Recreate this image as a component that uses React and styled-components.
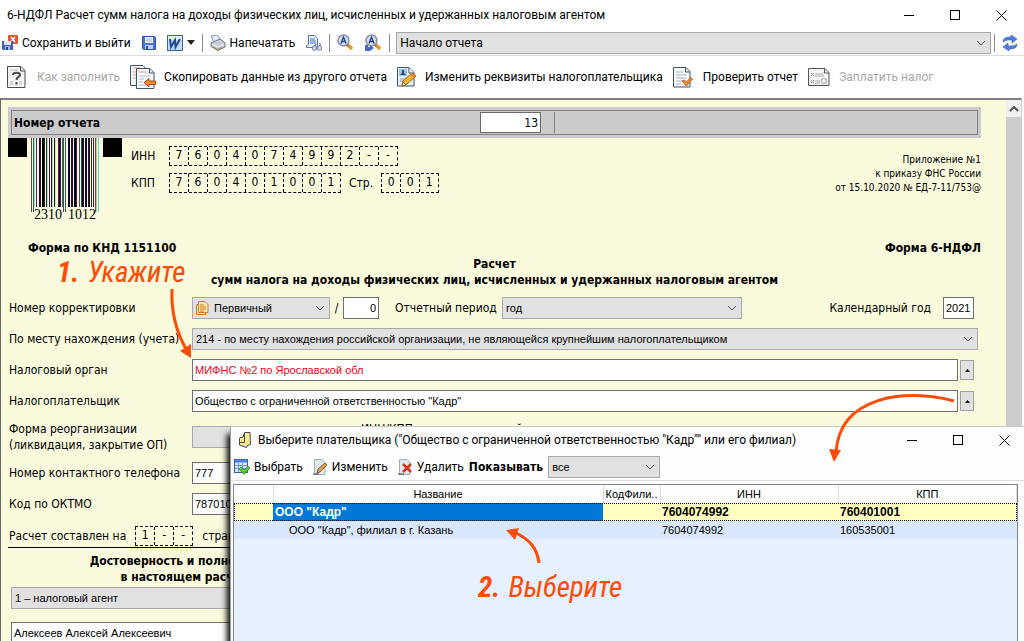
import React from "react";
import styled, { createGlobalStyle } from "styled-components";

const ui = `Roboto, "Noto Sans", sans-serif`;
const form = `"DejaVu Sans Condensed", "DejaVu Sans", sans-serif`;
const field = `"Liberation Sans", Arial, sans-serif`;

// x, width, colour, reaches down between the digits
const bars = [
  [0, 1, "#604040", true],
  [2, 1, "#306060", true],
  [3, 1, "#90e0d8", false],
  [5, 1, "#602050", false],
  [8, 1, "#101050", false],
  [9, 1, "#301010", false],
  [11, 2, "#000000", false],
  [13, 1, "#302010", false],
  [15, 1, "#103838", false],
  [16, 1, "#a0e8c0", false],
  [18, 1, "#501030", false],
  [20, 1, "#101040", false],
  [21, 1, "#b0d8d0", false],
  [23, 1, "#400818", false],
  [24, 1, "#c0f0c0", false],
  [27, 1, "#601040", false],
  [28, 1, "#201028", false],
  [29, 1, "#102050", false],
  [31, 1, "#387848", false],
  [32, 1, "#604050", true],
  [34, 1, "#286060", true],
  [37, 2, "#080830", false],
  [40, 1, "#401010", false],
  [41, 1, "#101048", false],
  [43, 2, "#000018", false],
  [45, 1, "#601030", false],
  [48, 1, "#704050", false],
  [50, 1, "#106058", false],
  [51, 1, "#100820", false],
  [52, 1, "#300820", false],
  [54, 2, "#080840", false],
  [57, 1, "#401018", false],
  [58, 1, "#100830", false],
  [60, 1, "#083820", false],
  [62, 1, "#601040", false],
  [64, 1, "#804050", true],
  [65, 1, "#a0d898", true],
  [67, 1, "#70d0d8", true],
];

const SaveExitIcon = () => (
  <svg width="16" height="16" viewBox="0 0 16 16" aria-hidden="true">
    <rect x="6" y="0" width="10" height="9" rx="1" fill="#e2552f" />
    <path d="M9 2l4 5M13 2l-4 5" stroke="#fff" strokeWidth="1.5" />
    <path d="M0 6h11v9H1l-1-1z" fill="#3f62c0" />
    <rect x="2" y="6" width="7" height="4" fill="#dfe6f8" />
    <rect x="3" y="11" width="5" height="4" fill="#a9b9e2" />
    <rect x="4" y="12" width="2" height="3" fill="#27428f" />
  </svg>
);

const SaveIcon = () => (
  <svg width="14" height="14" viewBox="0 0 14 14" aria-hidden="true">
    <path d="M.5.5h12l1 1v12h-12l-1-1z" fill="#4a74d4" stroke="#2c51ac" />
    <rect x="3" y="1" width="8" height="6" fill="#f3f6fd" />
    <path d="M4 3h6M4 5h6" stroke="#9db0dd" />
    <rect x="3" y="9" width="8" height="4" fill="#c3cfee" />
    <rect x="4" y="10" width="2" height="3" fill="#2c51ac" />
  </svg>
);

const WordIcon = () => (
  <svg width="16" height="16" viewBox="0 0 16 16" aria-hidden="true">
    <rect x=".5" y=".5" width="15" height="15" fill="#c6daf5" stroke="#3563b0" />
    <path d="M1 1h14v4H1z" fill="#e8f0fb" />
    <path
      d="M3 4l1 8L8 5l.5 7L13 4"
      fill="none"
      stroke="#1f4a9c"
      strokeWidth="2"
    />
  </svg>
);

const PrintIcon = () => (
  <svg width="16" height="16" viewBox="0 0 16 16" aria-hidden="true">
    <path d="M1 1l6-1 4 5-7 3z" fill="#e6eefc" stroke="#7f95c4" />
    <path d="M1 8l9-4 5 4v4l-7 3.500-7-4z" fill="#c9ccd2" stroke="#71757d" />
    <path d="M2 9l6 3 6-3" fill="none" stroke="#fff" />
    <path d="M3 12l5 2.500 4-2" fill="none" stroke="#9b8a3c" />
  </svg>
);

const PreviewIcon = () => (
  <svg width="16" height="16" viewBox="0 0 16 16" aria-hidden="true">
    <path d="M2.500.5h6l3 3v9h-11v-2l2-1z" fill="#eaf0fd" stroke="#4b72cf" />
    <path d="M4 4h5M4 6h6M4 8h6" stroke="#4b72cf" />
    <circle cx="8.500" cy="13" r="2.300" fill="#d5dbe8" stroke="#6f7f9f" />
    <circle cx="13.500" cy="13" r="2.300" fill="#d5dbe8" stroke="#6f7f9f" />
    <path d="M10 9l-1 2M14 8v3" stroke="#55617c" />
  </svg>
);

const FindIcon = ({ next }) => (
  <svg width="17" height="17" viewBox="0 0 17 17" aria-hidden="true">
    <path d="M10 10l5 5" stroke="#e9962b" strokeWidth="3.500" />
    <path d="M9 10l2 2" stroke="#8a5520" strokeWidth="2" />
    <circle cx="6.500" cy="6.500" r="5.500" fill="#d3def4" stroke="#8992a8" strokeWidth="1.500" />
    <path d="M4 9.500L6.500 3 9 9.500M5 7.500h3" fill="none" stroke="#1f3f8c" strokeWidth="1.300" />
    {next && <path d="M0 11h3v2h2v-2l4 3-4 3H0z" fill="#4569c6" />}
  </svg>
);

const RefreshIcon = () => (
  <svg width="16" height="16" viewBox="0 0 16 16" aria-hidden="true">
    <path d="M1 7c0-4 3-5 8-5V0l6 4-5 4V5C5 5 4 5 1 7z" fill="#4f7fe0" stroke="#2f57b4" strokeWidth=".6" />
    <path d="M15 9c0 4-3 5-8 5v2l-6-4 5-4v3c5 0 6 0 9-2z" fill="#4f7fe0" stroke="#2f57b4" strokeWidth=".6" />
  </svg>
);

const HelpIcon = () => (
  <svg width="22" height="22" viewBox="0 0 22 22" aria-hidden="true">
    <path d="M.5.5H14l4 4v17H.5z" fill="#f4f4f4" stroke="#4d4d4d" />
    <path d="M13.500 1v4H18" fill="none" stroke="#4d4d4d" />
    <path d="M3 4h8M3 16h3M12 16h3M3 18h3M12 18h3" stroke="#b8b8b8" />
    <path
      d="M6 9c0-3 7-3 7 0 0 2-3.500 2-3.500 5M9.500 16v2.500"
      fill="none"
      stroke="#4a4a4a"
      strokeWidth="2"
    />
  </svg>
);

const CopyIcon = () => (
  <svg width="26" height="24" viewBox="0 0 26 24" aria-hidden="true">
    <path d="M.5.5H13l3 3v17H.5z" fill="#f6f8f9" stroke="#3f5566" />
    <path d="M3 3h7M3 7h3M3 10h3M3 13h3" stroke="#e39c8a" />
    <path d="M6.500 3.500H20l4 4v16H6.500z" fill="#f6f8f9" stroke="#3f5566" />
    <path d="M19.500 4v4H24" fill="none" stroke="#3f5566" />
    <path d="M9 7h8" stroke="#e39c8a" />
    <path d="M9 11h12M9 14h5M9 17h4M9 20h8" stroke="#b3bfc8" />
    <path d="M14 17.500l5-4v2.500h6.500v3.500H19V22z" fill="#f08c32" stroke="#a8491b" />
  </svg>
);

const EditCardIcon = () => (
  <svg width="20" height="20" viewBox="0 0 20 20" aria-hidden="true">
    <path d="M.5.5H12l5 5v13.500H.5z" fill="#e8eff4" stroke="#3c5568" />
    <path d="M12 1v5h5" fill="#fff" stroke="#3c5568" />
    <rect x="2" y="2" width="8" height="7" fill="#9cc4e4" />
    <path d="M5 3h2v3l2 2H3l2-2z" fill="#234f7a" />
    <path d="M3 12h6M3 14h4" stroke="#8ca0ae" />
    <path d="M5 19l1-5 9-8 4 3-9 8z" fill="#f3b63c" stroke="#9b6013" />
    <path d="M15 6l4 3-2 2-4-3z" fill="#ea7d35" />
    <path d="M5 19l1-4 3 3z" fill="#f4e2bd" stroke="#6a5030" strokeWidth=".6" />
  </svg>
);

const CheckDocIcon = () => (
  <svg width="22" height="21" viewBox="0 0 22 21" aria-hidden="true">
    <path d="M.5.5H13l4 4V20H.5z" fill="#f5f7f8" stroke="#3f5566" />
    <path d="M12.500 1v4H17" fill="none" stroke="#3f5566" />
    <path d="M3 5h7M3 8h11M3 11h11M3 14h6M3 17h5" stroke="#a9b8c4" />
    <path d="M9 14l2.500-1 2 2 4-4.500 2 1.500-6 7z" fill="#f08c32" stroke="#a8491b" strokeWidth=".8" />
  </svg>
);

const PayIcon = () => (
  <svg width="23" height="18" viewBox="0 0 23 18" aria-hidden="true">
    <path d="M.5.500H17l4 4V17.500H.5z" fill="#f4f4f4" stroke="#555" />
    <path d="M16.500 1v4H21" fill="none" stroke="#555" />
    <path d="M7 6h8M7 8h9M7 13h5M7 15h5" stroke="#aaa" />
    <path d="M3 5l3 3M6 5L3 8M3 12l3 3M6 12l-3 3" stroke="#8f8f8f" />
    <circle cx="16" cy="13" r="2.500" fill="#fff" stroke="#bbb" strokeWidth="1.500" />
  </svg>
);

const PageIcon = () => (
  <svg width="13" height="14" viewBox="0 0 13 14" aria-hidden="true">
    <path d="M2.500.5H9l3 3v8H2.500z" fill="#fbe6ac" stroke="#c98224" />
    <path d="M2.500 3.500h-2v10h9v-2" fill="none" stroke="#c98224" />
    <path d="M4 4h4M4 6h6M4 8h6M4 10h4" stroke="#c98224" />
  </svg>
);

const ScrollIcon = () => (
  <svg width="13" height="16" viewBox="0 0 13 16" aria-hidden="true">
    <path
      d="M5.500.5H11l.5 12-3 1-1 2L2 13.500.5 13V6L4 5z"
      fill="#ffe98c"
      stroke="#3c4a5c"
    />
    <path d="M5.500 1v9.500H1" fill="none" stroke="#3c4a5c" />
  </svg>
);

const PickIcon = () => (
  <svg width="16" height="16" viewBox="0 0 16 16" aria-hidden="true">
    <rect x=".5" y=".5" width="13" height="13" fill="#dbe7fb" stroke="#2f5fc0" />
    <path d="M1 2h12" stroke="#4a7fdd" strokeWidth="3" />
    <path d="M1 6.500h12M1 9.500h12M4.500 4v9M8.500 4v9" stroke="#6c95df" />
    <path d="M5 10l2-2 3 3 4-4 2 2-6 6.500z" fill="#5cc53e" stroke="#2b7d1c" strokeWidth=".7" />
  </svg>
);

const EditIcon = () => (
  <svg width="15" height="16" viewBox="0 0 15 16" aria-hidden="true">
    <path d="M1.500.5H9l3 3v12H1.500z" fill="#dfe8ea" stroke="#9fb0b6" />
    <path d="M4 14l1-4 7-6 2 2-7 7z" fill="#d9a24a" stroke="#5f4a2c" strokeWidth=".8" />
    <path d="M0 15h6" stroke="#3d4a50" />
  </svg>
);

const DeleteIcon = () => (
  <svg width="15" height="16" viewBox="0 0 15 16" aria-hidden="true">
    <path d="M1.500.5H9l3 3v12H1.500z" fill="#dfe8ea" stroke="#9fb0b6" />
    <path d="M5 5l8 8M13 5l-8 8" stroke="#d2361f" strokeWidth="2.500" />
    <path d="M0 15h6" stroke="#3d4a50" />
  </svg>
);

const Chevron = ({ up }) => (
  <svg width="10" height="6" viewBox="0 0 10 6" aria-hidden="true">
    <path
      d={up ? "M1 5l4-4 4 4" : "M1 1l4 4 4-4"}
      fill="none"
      stroke="#505050"
      strokeWidth={up ? 2 : 1}
    />
  </svg>
);

const WindowButtons = () => (
  <Controls>
    <ControlButton aria-label="Свернуть">
      <svg width="11" height="11" viewBox="0 0 11 11">
        <path d="M0 5.500h10" stroke="#000" />
      </svg>
    </ControlButton>
    <ControlButton aria-label="Развернуть">
      <svg width="11" height="11" viewBox="0 0 11 11">
        <rect x=".5" y=".5" width="9" height="9" fill="none" stroke="#000" />
      </svg>
    </ControlButton>
    <ControlButton aria-label="Закрыть">
      <svg width="11" height="11" viewBox="0 0 11 11">
        <path d="M.5.5l10 10M10.500.5l-10 10" stroke="#000" />
      </svg>
    </ControlButton>
  </Controls>
);

const Combo = ({ id, value, icon, label, ...rest }) => (
  <ComboBox {...rest}>
    {icon}
    <ComboSelect id={id} aria-label={label} defaultValue={value}>
      <option>{value}</option>
    </ComboSelect>
    <ComboArrow>
      <Chevron />
    </ComboArrow>
  </ComboBox>
);

const Code = ({ value }) => (
  <CodeCells>
    {value.split("").map((char, i) => (
      <CodeCell key={i}>{char}</CodeCell>
    ))}
  </CodeCells>
);

const MoreButton = ({ label }) => (
  <SmallButton aria-label={label}>
    <svg width="5" height="3" viewBox="0 0 5 3">
      <path d="M0 3L2.500 0 5 3z" fill="#000" />
    </svg>
  </SmallButton>
);

const PayerDialog = () => (
  <Dialog role="dialog" aria-labelledby="payer-title">
    <DialogTitleBar>
      <ScrollIcon />
      <DialogTitle id="payer-title">
        Выберите плательщика ("Общество с ограниченной ответственностью "Кадр""
        или его филиал)
      </DialogTitle>
      <WindowButtons />
    </DialogTitleBar>
    <DialogToolbar>
      <ToolButton>
        <PickIcon />
        Выбрать
      </ToolButton>
      <ToolButton>
        <EditIcon />
        Изменить
      </ToolButton>
      <ToolButton>
        <DeleteIcon />
        Удалить
      </ToolButton>
      <ShowLabel htmlFor="show">Показывать</ShowLabel>
      <Combo id="show" value="все" $width={112} />
    </DialogToolbar>
    <GridFrame>
      <Grid>
        <colgroup>
          <col width="39" />
          <col width="330" />
          <col width="57" />
          <col width="178" />
          <col />
        </colgroup>
        <thead>
          <tr>
            <HeadCell />
            <HeadCell>Название</HeadCell>
            <HeadCell>КодФили..</HeadCell>
            <HeadCell>ИНН</HeadCell>
            <HeadCell>КПП</HeadCell>
          </tr>
        </thead>
        <tbody>
          <ActiveRow>
            <Cell />
            <Cell $selected>ООО "Кадр"</Cell>
            <Cell />
            <Cell>7604074992</Cell>
            <Cell>760401001</Cell>
          </ActiveRow>
          <GridRow>
            <Cell />
            <Cell $nested>ООО "Кадр", филиал в г. Казань</Cell>
            <Cell />
            <Cell>7604074992</Cell>
            <Cell>160535001</Cell>
          </GridRow>
        </tbody>
      </Grid>
    </GridFrame>
  </Dialog>
);

const App = () => (
  <>
    <GlobalStyle />
    <Window>
      <TitleBar>
        <WindowTitle>
          6-НДФЛ Расчет сумм налога на доходы физических лиц, исчисленных и
          удержанных налоговым агентом
        </WindowTitle>
        <WindowButtons />
      </TitleBar>
      <Toolbar>
        <ToolButton>
          <SaveExitIcon />
          Сохранить и выйти
        </ToolButton>
        <ToolButton aria-label="Сохранить">
          <SaveIcon />
        </ToolButton>
        <ToolButton aria-label="Открыть в Word">
          <WordIcon />
          <svg width="8" height="5" viewBox="0 0 8 5">
            <path d="M0 0h8L4 5z" fill="#222" />
          </svg>
        </ToolButton>
        <Separator />
        <ToolButton>
          <PrintIcon />
          Напечатать
        </ToolButton>
        <ToolButton aria-label="Просмотр">
          <PreviewIcon />
        </ToolButton>
        <Separator />
        <ToolButton aria-label="Найти">
          <FindIcon />
        </ToolButton>
        <ToolButton aria-label="Найти далее">
          <FindIcon next />
        </ToolButton>
        <Separator />
        <SectionCombo label="Раздел" value="Начало отчета" />
        <Separator />
        <ToolButton aria-label="Обновить">
          <RefreshIcon />
        </ToolButton>
      </Toolbar>
      <ActionBar>
        <ActionButton disabled>
          <HelpIcon />
          Как заполнить
        </ActionButton>
        <ActionButton>
          <CopyIcon />
          Скопировать данные из другого отчета
        </ActionButton>
        <ActionButton>
          <EditCardIcon />
          Изменить реквизиты налогоплательщика
        </ActionButton>
        <ActionButton>
          <CheckDocIcon />
          Проверить отчет
        </ActionButton>
        <ActionButton disabled>
          <PayIcon />
          Заплатить налог
        </ActionButton>
      </ActionBar>
      <Body>
        <Report>
          <NumberBar>
            <NumberLabel htmlFor="number">Номер отчета</NumberLabel>
            <NumberInput id="number" defaultValue="13" />
            <NumberRest />
          </NumberBar>
          <Head>
            <Marks>
              <Mark />
              <Barcode width="68" height="84" viewBox="0 0 68 84">
                {bars.map(([x, width, fill, long]) => (
                  <rect
                    key={x}
                    x={x}
                    y="0"
                    width={width}
                    height={long ? 74 : 69}
                    fill={fill}
                  />
                ))}
                <text x="3" y="81">
                  2310
                </text>
                <text x="37" y="81">
                  1012
                </text>
              </Barcode>
              <Mark />
            </Marks>
            <Codes>
              <CodeLine>
                <CodeLabel>ИНН</CodeLabel>
                <Code value="7604074992--" />
              </CodeLine>
              <CodeLine>
                <CodeLabel>КПП</CodeLabel>
                <Code value="760401001" />
                <span>Стр.</span>
                <Code value="001" />
              </CodeLine>
            </Codes>
            <Appendix>
              Приложение №1
              <br />
              к приказу ФНС России
              <br />
              от 15.10.2020 № ЕД-7-11/753@
            </Appendix>
          </Head>
          <FormNames>
            <span>Форма по КНД 1151100</span>
            <span>Форма 6-НДФЛ</span>
          </FormNames>
          <Heading>
            Расчет
            <br />
            сумм налога на доходы физических лиц, исчисленных и удержанных
            налоговым агентом
          </Heading>
          <Fields>
            <Row $inset={7}>
              <Label htmlFor="correction">Номер корректировки</Label>
              <Combo
                id="correction"
                value="Первичный"
                icon={<PageIcon />}
                $width={138}
              />
              <Slash>/</Slash>
              <Input
                aria-label="Номер"
                defaultValue="0"
                $width={36}
                $align="right"
              />
              <PeriodLabel htmlFor="period">Отчетный период</PeriodLabel>
              <Combo id="period" value="год" $width={240} />
              <YearLabel htmlFor="year">Календарный год</YearLabel>
              <Input id="year" defaultValue="2021" $width={31} />
            </Row>
            <Row $inset={3}>
              <Label htmlFor="place">По месту нахождения (учета)</Label>
              <Combo
                id="place"
                value="214 - по месту нахождения российской организации, не являющейся крупнейшим налогоплательщиком"
              />
            </Row>
            <Row $inset={7}>
              <Label htmlFor="office">Налоговый орган</Label>
              <Input
                id="office"
                defaultValue="МИФНС №2 по Ярославской обл"
                $color="#f00018"
              />
              <MoreButton label="Выбрать налоговый орган" />
            </Row>
            <Row $inset={7}>
              <Label htmlFor="payer">Налогоплательщик</Label>
              <Input
                id="payer"
                defaultValue={'Общество с ограниченной ответственностью "Кадр"'}
              />
              <MoreButton label="Выбрать налогоплательщика" />
            </Row>
            <Row $inset={3}>
              <Label htmlFor="reorg">
                Форма реорганизации
                <br />
                (ликвидация, закрытие ОП)
              </Label>
              <Combo id="reorg" value="" $width={138} />
              <ReorgLabel>ИНН/КПП реорганизованной</ReorgLabel>
            </Row>
            <Row>
              <Label htmlFor="phone">Номер контактного телефона</Label>
              <Input id="phone" defaultValue="777" $width={240} />
            </Row>
            <Row>
              <Label htmlFor="oktmo">Код по ОКТМО</Label>
              <Input id="oktmo" defaultValue="78701000" $width={240} />
            </Row>
            <PagesRow>
              Расчет составлен на
              <Code value="1--" />
              страницах
            </PagesRow>
          </Fields>
          <Signer>
            <Heading>
              Достоверность и полноту сведений, указанных
              <br />в настоящем расчете, подтверждаю:
            </Heading>
            <Combo label="Подписант" value="1 – налоговый агент" />
            <SignerInput
              aria-label="ФИО"
              defaultValue="Алексеев Алексей Алексеевич"
            />
          </Signer>
        </Report>
        <ScrollTrack>
          <ScrollArrow>
            <Chevron up />
          </ScrollArrow>
          <ScrollThumb />
        </ScrollTrack>
      </Body>
      <PayerDialog />
      <Hint $left={57} $top={254}>
        <b>1.</b>
        Укажите
      </Hint>
      <Hint $left={478} $top={569}>
        <b>2.</b>
        Выберите
      </Hint>
      <Arrows width="1024" height="641" viewBox="0 0 1024 641">
        <g fill="none" stroke="#ff4b05" strokeWidth="3">
          <path d="M172 289C171 312 177 333 186 349" />
          <path d="M954 401C905 388 840 396 836 452" />
          <path d="M539 563C537 548 530 540 516 533" />
        </g>
        <g fill="#ff4b05">
          <path d="M180 351l11-7v14z" />
          <path d="M829 449l12 1-7 12z" />
          <path d="M506 530l13-2-4 12z" />
        </g>
      </Arrows>
    </Window>
  </>
);

export default App;

const GlobalStyle = createGlobalStyle`
  * {
    box-sizing: border-box;
  }
  body {
    margin: 0;
    background: #fff;
    color: #000;
    font: 12px/16px ${ui};
  }
  button, input, select {
    font: inherit;
    color: inherit;
    margin: 0;
  }
  svg {
    flex: none;
  }
`;

const Window = styled.div`
  position: relative;
  display: flex;
  flex-direction: column;
  height: 100vh;
  overflow: hidden;
`;

const TitleBar = styled.header`
  display: flex;
  align-items: center;
  height: 30px;
  padding: 0 17px 0 7px;
`;

const WindowTitle = styled.h1`
  flex: 1;
  margin: 0;
  font-size: 12px;
  font-weight: 400;
  white-space: nowrap;
`;

const Controls = styled.div`
  display: flex;
  gap: 35px;
`;

const ControlButton = styled.button`
  display: flex;
  padding: 0;
  border: none;
  background: none;
`;

const Toolbar = styled.div`
  display: flex;
  align-items: center;
  gap: 7px;
  height: 26px;
  padding: 0 6px 0 2px;
  border-bottom: 1px solid #dcdcdc;
`;

const ToolButton = styled.button`
  display: flex;
  align-items: center;
  gap: 4px;
  padding: 0;
  border: none;
  background: none;
  white-space: nowrap;
  & + & {
    margin-left: 4px;
  }
`;

const Separator = styled.div`
  width: 1px;
  height: 18px;
  background: #8c8c8c;
`;

const SectionCombo = styled(Combo)`
  && {
    margin: 0 -4px 0 -1px;
    font: 12px ${ui};
  }
`;

const ActionBar = styled.div`
  display: flex;
  align-items: center;
  gap: 10px;
  height: 42px;
  padding: 0 7px;
`;

const ActionButton = styled(ToolButton)`
  gap: 8px;
  && {
    margin: 0;
  }
  &:disabled {
    color: #a8a8a8;
  }
`;

const Body = styled.div`
  display: flex;
  flex: 1;
  min-height: 0;
  margin-right: 2px;
  border-top: 2px solid #808080;
  border-right: 1px solid #d0d0d0;
  border-left: 1px solid #696969;
`;

const Report = styled.main`
  flex: 1;
  min-width: 0;
  padding: 7px 25px 0 7px;
  overflow: hidden;
  background: #fafadc;
  font: 12px/16px ${form};
`;

const NumberBar = styled.div`
  display: flex;
  align-items: center;
  height: 31px;
  padding: 2px 2px 2px 3px;
  border: 3px solid #cbcbcb;
  background: #cbcbcb;
  outline: 1px solid #808080;
  outline-offset: -4px;
  font-weight: 700;
`;

const NumberLabel = styled.label`
  flex: 0 0 466px;
`;

const NumberInput = styled.input`
  width: 61px;
  height: 21px;
  padding: 0 2px;
  border: 1px solid #696969;
  background: #fff;
  font-weight: 400;
  text-align: right;
`;

const NumberRest = styled.div`
  flex: 1;
  align-self: stretch;
  margin-left: 13px;
  border-left: 1px solid #808080;
`;

const Head = styled.div`
  display: flex;
  height: 102px;
`;

const Marks = styled.div`
  display: flex;
  align-items: flex-start;
  justify-content: space-between;
  width: 114px;
`;

const Mark = styled.div`
  width: 19px;
  height: 19px;
  background: #000;
`;

const Barcode = styled.svg`
  font: 14px "Liberation Serif", "Times New Roman", serif;
`;

const Codes = styled.div`
  display: flex;
  flex-direction: column;
  gap: 7px;
  flex: 1;
  padding: 8px 0 0 9px;
`;

const CodeLine = styled.div`
  display: flex;
  align-items: center;
  gap: 8px;
`;

const CodeLabel = styled.span`
  width: 30px;
`;

const CodeCells = styled.span`
  display: flex;
  border: 1px dashed #000;
  border-left: none;
`;

const CodeCell = styled.span`
  width: 19px;
  height: 18px;
  border-left: 1px dashed #000;
  line-height: 16px;
  text-align: center;
`;

const Appendix = styled.div`
  padding-top: 15px;
  font-size: 10px;
  line-height: 14px;
  text-align: right;
`;

const FormNames = styled.div`
  display: flex;
  justify-content: space-between;
  padding-left: 20px;
  font-weight: 700;
`;

const Heading = styled.h2`
  margin: 0;
  font-size: 12px;
  line-height: 16px;
  text-align: center;
`;

const Fields = styled.div`
  display: flex;
  flex-direction: column;
  gap: 9px;
  padding-top: 9px;
`;

const Row = styled.div`
  display: flex;
  align-items: center;
  min-height: 22px;
  padding: 0 ${({ $inset }) => $inset || 0}px 0 1px;
`;

const Label = styled.label`
  flex: 0 0 183px;
  white-space: nowrap;
`;

const ComboBox = styled.div`
  position: relative;
  display: flex;
  align-items: center;
  flex: ${({ $width }) => ($width ? `0 0 ${$width}px` : 1)};
  min-width: 0;
  height: 22px;
  padding-left: 3px;
  border: 1px solid #a9a9a9;
  background: #e1e1e1;
  font: 11px ${field};
`;

const ComboSelect = styled.select`
  flex: 1;
  min-width: 0;
  height: 20px;
  padding: 0;
  border: none;
  outline: none;
  appearance: none;
  background: none;
  svg + & {
    padding-left: 5px;
  }
`;

const ComboArrow = styled.span`
  position: absolute;
  top: 0;
  right: 4px;
  bottom: 0;
  display: flex;
  align-items: center;
  pointer-events: none;
`;

const Input = styled.input`
  flex: ${({ $width }) => ($width ? `0 0 ${$width}px` : 1)};
  min-width: 0;
  height: 22px;
  padding: 0 2px;
  border: 1px solid #707070;
  background: #fff;
  color: ${({ $color }) => $color || "#000"};
  font: 11px ${field};
  text-align: ${({ $align }) => $align || "left"};
`;

const Slash = styled.span`
  width: 13px;
  text-align: center;
`;

const PeriodLabel = styled.label`
  width: 123px;
  padding-left: 16px;
  white-space: nowrap;
`;

const YearLabel = styled.label`
  margin: 0 12px 0 auto;
`;

const SmallButton = styled.button`
  display: flex;
  align-items: center;
  justify-content: center;
  width: 14px;
  height: 20px;
  margin-left: 2px;
  padding: 0;
  border: 1px solid #a0a0a0;
  background: #e1e1e1;
`;

const ReorgLabel = styled.span`
  align-self: flex-start;
  padding-left: 31px;
`;

const PagesRow = styled.div`
  display: flex;
  align-items: center;
  gap: 9px;
  height: 24px;
  padding-left: 1px;
  border-bottom: 1px solid #000;
`;

const Signer = styled.section`
  width: 47%;
  padding: 5px 0 0 3px;
  ${ComboBox} {
    margin-top: 2px;
  }
`;

const SignerInput = styled(Input)`
  width: 100%;
  margin-top: 13px;
`;

const ScrollTrack = styled.div`
  display: flex;
  flex-direction: column;
  width: 15px;
  background: #f0f0f0;
`;

const ScrollArrow = styled.div`
  display: flex;
  align-items: center;
  justify-content: center;
  height: 17px;
`;

const ScrollThumb = styled.div`
  flex: 1;
  background: #cdcdcd;
`;

const Dialog = styled.section`
  position: absolute;
  top: 426px;
  right: 0;
  bottom: 0;
  left: 230px;
  display: flex;
  flex-direction: column;
  border-top: 1px solid #c8c8c8;
  border-left: 1px solid #a0a0a0;
  background: #fdfdfd;
  box-shadow: -3px 8px 6px 0 #000;
`;

const DialogTitleBar = styled.div`
  display: flex;
  align-items: center;
  gap: 6px;
  height: 26px;
  padding: 0 14px 0 8px;
`;

const DialogTitle = styled.h2`
  flex: 1;
  margin: 0;
  font-size: 12px;
  font-weight: 400;
  white-space: nowrap;
`;

const DialogToolbar = styled.div`
  display: flex;
  align-items: center;
  gap: 5px;
  height: 28px;
  padding-left: 3px;
  border-bottom: 1px solid #dcdcdc;
  ${ToolButton} + ${ToolButton} {
    margin-left: 5px;
  }
`;

const ShowLabel = styled.label`
  font: 700 12px ${form};
`;

const GridFrame = styled.div`
  flex: 1;
  margin: 3px 6px 0 2px;
  border: 1px solid #828790;
  border-bottom: none;
  background: #e6f0ff;
`;

const Grid = styled.table`
  width: 100%;
  table-layout: fixed;
  border-collapse: collapse;
  font: 11px ${field};
`;

const HeadCell = styled.th`
  height: 18px;
  padding: 0;
  border-right: 1px solid #dcdcdc;
  background: #fdfdfd;
  font-weight: 400;
`;

const Cell = styled.td`
  height: 18px;
  padding: 0 0 0 ${({ $nested }) => ($nested ? 16 : 2)}px;
  background: ${({ $selected }) => ($selected ? "#0078d7" : "none")};
  color: ${({ $selected }) => ($selected ? "#fff" : "#000")};
`;

const GridRow = styled.tr`
  background: #dae8ff;
`;

const ActiveRow = styled.tr`
  outline: 1px dotted #000;
  outline-offset: -1px;
  background: #ffffc0;
  font-size: 12px;
  font-weight: 700;
`;

const Hint = styled.div`
  position: absolute;
  top: ${({ $top }) => $top}px;
  left: ${({ $left }) => $left}px;
  display: flex;
  gap: 8px;
  color: #ff4b05;
  font: italic 29px/36px "Roboto Condensed", Roboto, sans-serif;
  white-space: nowrap;
`;

const Arrows = styled.svg`
  position: absolute;
  top: 0;
  left: 0;
  pointer-events: none;
`;
